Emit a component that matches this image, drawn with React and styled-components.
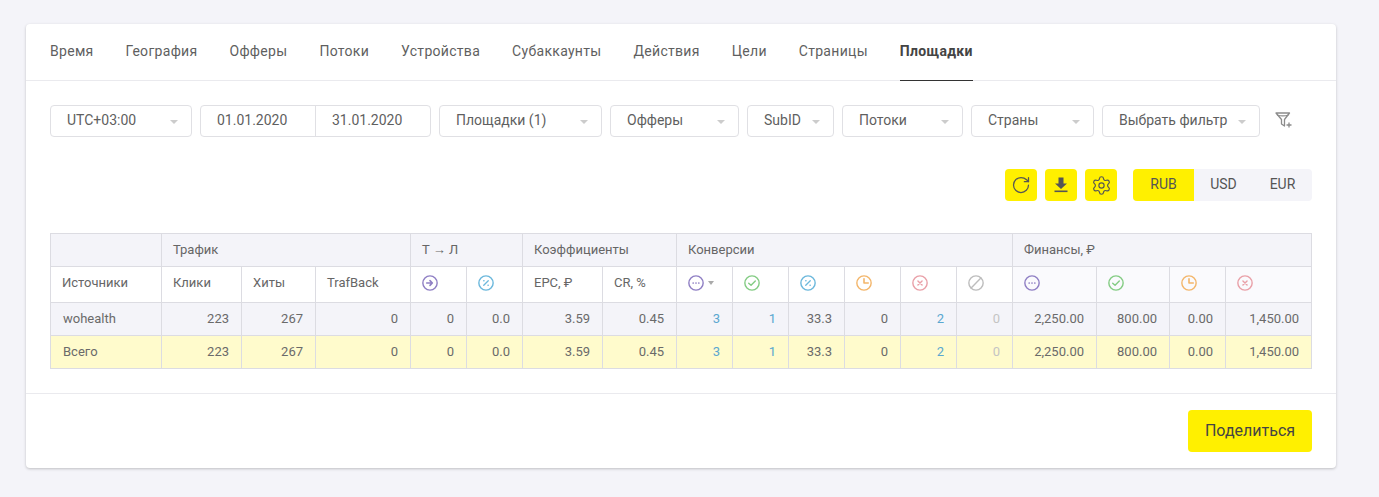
import React from 'react';
import styled, { createGlobalStyle } from 'styled-components';
import { RotateCw, Settings } from 'lucide-react';

const GlobalStyle = createGlobalStyle`
  body {
    margin: 0;
    background: #f4f4f9;
    font-family: Roboto, "Liberation Sans", sans-serif;
    color: #555;
  }
`;

const Page = styled.div`
  padding: 24px 43px 29px 26px;
`;

const Card = styled.div`
  background: #fff;
  border-radius: 4px;
  box-shadow: 0 1px 3px rgba(0, 0, 0, 0.22);
`;

const Tabs = styled.nav`
  display: flex;
  gap: 32px;
  height: 57px;
  padding: 0 24px;
  box-sizing: border-box;
  border-bottom: 1px solid #eaeaee;
`;

const Tab = styled.div`
  display: flex;
  align-items: center;
  height: 57px;
  padding-bottom: 2px;
  box-sizing: border-box;
  font-size: 14px;
  letter-spacing: 0.3px;
  font-weight: ${props => (props.$active ? 700 : 400)};
  color: ${props => (props.$active ? '#444' : '#5f5f5f')};
  border-bottom: 1px solid ${props => (props.$active ? '#333' : 'transparent')};
`;

const Content = styled.div`
  padding: 24px 24px 24px;
  border-bottom: 1px solid #eaeaee;
`;

const Filters = styled.div`
  display: flex;
  align-items: center;
  gap: 8px;
`;

const Select = styled.div`
  display: flex;
  align-items: center;
  justify-content: space-between;
  width: ${props => props.$width}px;
  height: 32px;
  box-sizing: border-box;
  padding: 0 13px 2px 16px;
  border: 1px solid #e0e0e4;
  border-radius: 4px;
  font-size: 14px;
  color: #5f5f5f;
  &::after {
    content: '';
    border-style: solid;
    border-width: 4px 4px 0;
    border-color: #ccc transparent transparent;
    margin-top: 4px;
  }
`;

const DateRange = styled.div`
  display: flex;
  width: 231px;
  height: 32px;
  box-sizing: border-box;
  border: 1px solid #e0e0e4;
  border-radius: 4px;
`;

const DateField = styled.div`
  display: flex;
  align-items: center;
  padding: 0 0 2px 16px;
  width: ${props => props.$width}px;
  box-sizing: border-box;
  font-size: 14px;
  color: #5f5f5f;
  & + & {
    border-left: 1px solid #e0e0e4;
  }
`;

const FilterAdd = styled.div`
  display: flex;
  margin-left: 7px;
  margin-bottom: 2px;
`;

const Actions = styled.div`
  display: flex;
  justify-content: flex-end;
  margin-top: 32px;
  gap: 8px;
`;

const IconButton = styled.div`
  display: flex;
  align-items: center;
  justify-content: center;
  width: 32px;
  height: 32px;
  border-radius: 4px;
  background: #fff000;
  color: #555;
`;

const Currencies = styled.div`
  display: flex;
  margin-left: 8px;
  height: 32px;
  border-radius: 4px;
  background: #f4f4f9;
`;

const Currency = styled.div`
  display: flex;
  align-items: center;
  justify-content: center;
  width: ${props => props.$width}px;
  padding-bottom: 2px;
  box-sizing: border-box;
  font-size: 14px;
  color: #555;
  border-radius: ${props => (props.$active ? '4px 0 0 4px' : '0')};
  background: ${props => (props.$active ? '#fff000' : 'transparent')};
`;

const Table = styled.table`
  width: 1261px;
  margin-top: 32px;
  table-layout: fixed;
  border-collapse: collapse;
  font-size: 13px;
`;

const Col = styled.col`
  width: ${props => props.$width}px;
`;

const GroupCell = styled.th`
  height: 33px;
  padding: 0 11px 2px;
  box-sizing: border-box;
  background: #f4f4f9;
  border: 1px solid #dcdce2;
  font-weight: 400;
  text-align: left;
  color: #666;
`;

const HeadCell = styled.th`
  height: 36px;
  padding: 0 11px 4px;
  box-sizing: border-box;
  background: ${props => (props.$tinted ? '#fafafd' : '#fff')};
  border: 1px solid #dcdce2;
  font-weight: 400;
  text-align: left;
  color: #666;
`;

const HeadIcon = styled.span`
  display: inline-flex;
  align-items: center;
  gap: 4px;
  vertical-align: middle;
  &[data-sort]::after {
    content: '';
    border-style: solid;
    border-width: 4px 3.5px 0;
    border-color: #aaa transparent transparent;
  }
`;

const Row = styled.tr`
  background: ${props => (props.$total ? '#fffbcc' : '#f4f4f9')};
`;

const Cell = styled.td`
  height: 33px;
  padding: 0 12px 2px;
  box-sizing: border-box;
  border: 1px solid #dcdce2;
  text-align: ${props => (props.$left ? 'left' : 'right')};
  color: ${props => props.$color || '#6a6a6a'};
`;

const Footer = styled.div`
  display: flex;
  justify-content: flex-end;
  padding: 16px 24px;
`;

const ShareButton = styled.div`
  display: flex;
  align-items: center;
  justify-content: center;
  width: 124px;
  height: 42px;
  padding-bottom: 1px;
  box-sizing: border-box;
  border-radius: 4px;
  background: #fff000;
  font-size: 16px;
  color: #444;
`;

const StatusIcon = ({ color, kind }) => (
  <svg width="16" height="16" viewBox="0.5 0.5 17 17" fill="none" stroke={color} strokeWidth="1.5" strokeLinecap="round" strokeLinejoin="round">
    <circle cx="9" cy="9" r="7.6" />
    {kind === 'arrow' && <path d="M5.5 9h6M9 6.5 11.5 9 9 11.5" strokeWidth="1.7" />}
    {kind === 'dots' && <path d="M6 9h.01M9 9h.01M12 9h.01" strokeWidth="1.8" />}
    {kind === 'check' && <path d="M5.5 9.2 8 11.5l4.5-4.5" />}
    {kind === 'percent' && <path d="M11.4 6.6 6.6 11.4M6.6 6.6h.3M11.1 11.4h.3" strokeWidth="1.4" />}
    {kind === 'clock' && <path d="M9 4.5V9h4.5" strokeWidth="1.7" />}
    {kind === 'cross' && <path d="M6.8 6.8l4.4 4.4M11.2 6.8l-4.4 4.4" />}
    {kind === 'ban' && <path d="M3.8 14.2 14.2 3.8" />}
  </svg>
);

const DownloadIcon = () => (
  <svg width="18" height="18" viewBox="0 0 18 18" fill="#555">
    <path d="M6.5 1.5h5v6h3.5L9 13 3 7.5h3.5z" />
    <rect x="2.5" y="14.5" width="13" height="1.6" />
  </svg>
);

const FunnelPlusIcon = () => (
  <svg width="18" height="18" viewBox="0 0 18 18" fill="none" stroke="#8c8c8c" strokeWidth="1.3" strokeLinejoin="round">
    <path d="M1 2h13.5L9.5 8.5v6.5L6.5 13V8.5z" />
    <path d="M2 4c3 1 8.5 1 11.5 0" />
    <path d="M14 11.5v5M11.5 14h5" />
  </svg>
);

const purple = '#8f7fc4';
const green = '#84cc84';
const blue = '#6cb8dc';
const orange = '#f3b66b';
const red = '#e9a0a8';
const grey = '#bdbdbd';
const link = '#5aa7d0';

const tabs = ['Время', 'География', 'Офферы', 'Потоки', 'Устройства', 'Субаккаунты', 'Действия', 'Цели', 'Страницы', 'Площадки'];
const columns = [111, 80, 74, 95, 56, 56, 80, 74, 56, 56, 56, 56, 56, 56, 84, 73, 56, 86];

const TotalsRow = ({ name, total }) => (
  <Row $total={total}>
    <Cell $left>{name}</Cell>
    <Cell>223</Cell>
    <Cell>267</Cell>
    <Cell>0</Cell>
    <Cell>0</Cell>
    <Cell>0.0</Cell>
    <Cell>3.59</Cell>
    <Cell>0.45</Cell>
    <Cell $color={link}>3</Cell>
    <Cell $color={link}>1</Cell>
    <Cell>33.3</Cell>
    <Cell>0</Cell>
    <Cell $color={link}>2</Cell>
    <Cell $color="#c4c4c4">0</Cell>
    <Cell>2,250.00</Cell>
    <Cell>800.00</Cell>
    <Cell>0.00</Cell>
    <Cell>1,450.00</Cell>
  </Row>
);

export default function App() {
  return (
    <Page>
      <GlobalStyle />
      <Card>
        <Tabs>
          {tabs.map(tab => (
            <Tab key={tab} $active={tab === 'Площадки'}>{tab}</Tab>
          ))}
        </Tabs>
        <Content>
          <Filters>
            <Select $width={142}>UTC+03:00</Select>
            <DateRange>
              <DateField $width={114}>01.01.2020</DateField>
              <DateField $width={115}>31.01.2020</DateField>
            </DateRange>
            <Select $width={163}>Площадки (1)</Select>
            <Select $width={129}>Офферы</Select>
            <Select $width={87}>SubID</Select>
            <Select $width={121}>Потоки</Select>
            <Select $width={123}>Страны</Select>
            <Select $width={158}>Выбрать фильтр</Select>
            <FilterAdd><FunnelPlusIcon /></FilterAdd>
          </Filters>
          <Actions>
            <IconButton><RotateCw size={20} strokeWidth={1.5} /></IconButton>
            <IconButton><DownloadIcon /></IconButton>
            <IconButton><Settings size={21} strokeWidth={1.3} /></IconButton>
            <Currencies>
              <Currency $width={61} $active>RUB</Currency>
              <Currency $width={59}>USD</Currency>
              <Currency $width={59}>EUR</Currency>
            </Currencies>
          </Actions>
          <Table>
            <colgroup>
              {columns.map((width, i) => <Col key={i} $width={width} />)}
            </colgroup>
            <thead>
              <tr>
                <GroupCell />
                <GroupCell colSpan={3}>Трафик</GroupCell>
                <GroupCell colSpan={2}>Т → Л</GroupCell>
                <GroupCell colSpan={2}>Коэффициенты</GroupCell>
                <GroupCell colSpan={6}>Конверсии</GroupCell>
                <GroupCell colSpan={4}>Финансы, ₽</GroupCell>
              </tr>
              <tr>
                <HeadCell>Источники</HeadCell>
                <HeadCell>Клики</HeadCell>
                <HeadCell>Хиты</HeadCell>
                <HeadCell>TrafBack</HeadCell>
                <HeadCell><HeadIcon><StatusIcon color={purple} kind="arrow" /></HeadIcon></HeadCell>
                <HeadCell><HeadIcon><StatusIcon color={blue} kind="percent" /></HeadIcon></HeadCell>
                <HeadCell>EPC, ₽</HeadCell>
                <HeadCell>CR, %</HeadCell>
                <HeadCell><HeadIcon data-sort><StatusIcon color={purple} kind="dots" /></HeadIcon></HeadCell>
                <HeadCell><HeadIcon><StatusIcon color={green} kind="check" /></HeadIcon></HeadCell>
                <HeadCell><HeadIcon><StatusIcon color={blue} kind="percent" /></HeadIcon></HeadCell>
                <HeadCell><HeadIcon><StatusIcon color={orange} kind="clock" /></HeadIcon></HeadCell>
                <HeadCell><HeadIcon><StatusIcon color={red} kind="cross" /></HeadIcon></HeadCell>
                <HeadCell><HeadIcon><StatusIcon color={grey} kind="ban" /></HeadIcon></HeadCell>
                <HeadCell $tinted><HeadIcon><StatusIcon color={purple} kind="dots" /></HeadIcon></HeadCell>
                <HeadCell $tinted><HeadIcon><StatusIcon color={green} kind="check" /></HeadIcon></HeadCell>
                <HeadCell $tinted><HeadIcon><StatusIcon color={orange} kind="clock" /></HeadIcon></HeadCell>
                <HeadCell $tinted><HeadIcon><StatusIcon color={red} kind="cross" /></HeadIcon></HeadCell>
              </tr>
            </thead>
            <tbody>
              <TotalsRow name="wohealth" />
              <TotalsRow name="Всего" total />
            </tbody>
          </Table>
        </Content>
        <Footer>
          <ShareButton>Поделиться</ShareButton>
        </Footer>
      </Card>
    </Page>
  );
}
